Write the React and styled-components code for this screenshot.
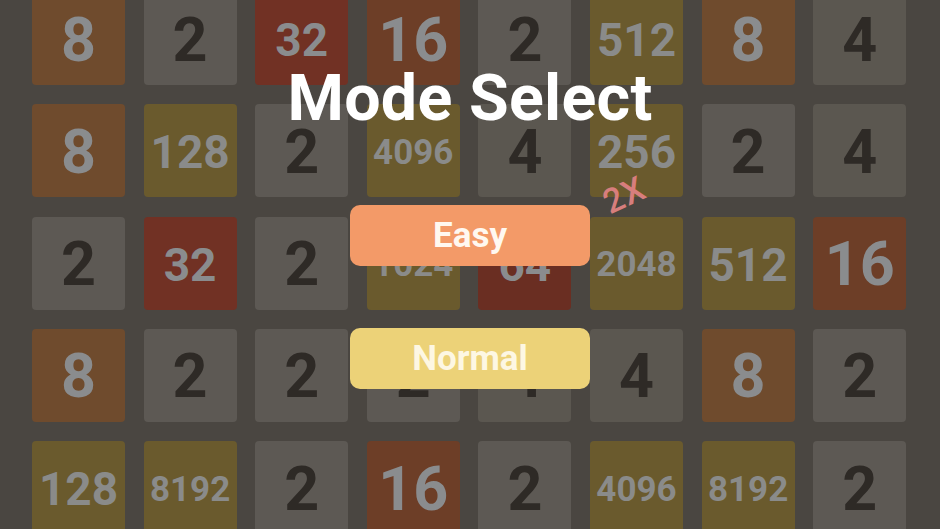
import React from "react";
import styled, { createGlobalStyle } from "styled-components";

const Global = createGlobalStyle`
  html, body { margin: 0; padding: 0; background: #4a4641; }
  body { font-family: Roboto, "Liberation Sans", sans-serif; overflow: hidden; }
  * { box-sizing: border-box; }
`;

const Screen = styled.div`
  position: relative;
  width: 940px;
  height: 529px;
  overflow: hidden;
  background: #4a4641;
`;

const Board = styled.div`
  display: grid;
  grid-template-columns: repeat(8, 93px);
  grid-template-rows: repeat(5, 93px);
  column-gap: 18.6px;
  row-gap: 19.25px;
  margin: -8px 0 0 32px;
  width: 874px;
`;

const palette = {
  2: ["#5d5954", "#2e2a26"],
  4: ["#5b5750", "#2e2a26"],
  8: ["#6f4b2d", "#8a8c8e"],
  16: ["#6d3e27", "#8a8c8e"],
  32: ["#713124", "#8a8c8e"],
  64: ["#6a2e22", "#8a8c8e"],
  big: ["#6a5a2d", "#8a8b8a"],
};

const sizeFor = (v) => {
  const s = String(v);
  if (s.length >= 4) return 35;
  if (s.length === 3 || v === 32 || v === 64) return 46;
  return 61;
};

const Tile = styled.div`
  display: flex;
  align-items: center;
  justify-content: center;
  border-radius: 4px;
  background: ${(p) => p.$bg};
  color: ${(p) => p.$fg};
  font-weight: 700;
  font-size: ${(p) => p.$size}px;
  line-height: 1;
  padding-top: 3px;
`;

const Overlay = styled.div`
  position: absolute;
  inset: 0;
  display: flex;
  flex-direction: column;
  align-items: center;
  padding-top: 66px;
`;

const Title = styled.h1`
  margin: 0;
  color: #ffffff;
  font-size: 64.5px;
  font-weight: 700;
  line-height: 64px;
  letter-spacing: 0.3px;
`;

const Buttons = styled.div`
  display: flex;
  flex-direction: column;
  gap: 62px;
  margin-top: 75px;
`;

const ModeButton = styled.button`
  position: relative;
  width: 240px;
  height: 61px;
  border: none;
  border-radius: 10px;
  background: ${(p) => p.$bg};
  color: ${(p) => p.$fg};
  font-family: Roboto, "Liberation Sans", sans-serif;
  font-weight: 700;
  font-size: 35px;
  line-height: 1;
  padding: 0;
  cursor: pointer;
`;

const Badge = styled.span`
  position: absolute;
  left: 262px;
  top: -20px;
  color: #d77e7d;
  font-size: 34px;
  line-height: 34px;
  font-weight: 500;
  letter-spacing: 1px;
  transform: rotate(-25deg);
  transform-origin: left bottom;
`;

const rows = [
  [8, 2, 32, 16, 2, 512, 8, 4],
  [8, 128, 2, 4096, 4, 256, 2, 4],
  [2, 32, 2, 1024, 64, 2048, 512, 16],
  [8, 2, 2, 2, 4, 4, 8, 2],
  [128, 8192, 2, 16, 2, 4096, 8192, 2],
];

export default function App() {
  return (
    <Screen>
      <Global />
      <Board>
        {rows.flat().map((v, i) => {
          const [bg, fg] = palette[v] || palette.big;
          return (
            <Tile key={i} $bg={bg} $fg={fg} $size={sizeFor(v)}>
              {v}
            </Tile>
          );
        })}
      </Board>
      <Overlay>
        <Title>Mode Select</Title>
        <Buttons>
          <ModeButton $bg="#f39a68" $fg="#fff8f0">
            Easy
            <Badge>2X</Badge>
          </ModeButton>
          <ModeButton $bg="#ecd278" $fg="#fdf7e3">
            Normal
          </ModeButton>
        </Buttons>
      </Overlay>
    </Screen>
  );
}
